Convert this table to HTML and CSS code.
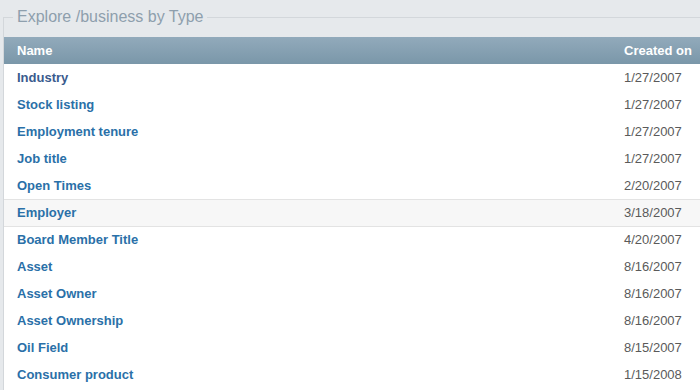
FILE: index.html
```html
<!DOCTYPE html>
<html lang="en">
<head>
  <meta charset="UTF-8" />
  <title>Explore /business by Type</title>
  <link rel="stylesheet" href="styles.css">
</head>
<body>
  <fieldset class="explore">
    <legend>Explore /business by Type</legend>
    <div class="list">
      <table class="types">
        <colgroup>
          <col class="col-name">
          <col class="col-date">
        </colgroup>
        <thead>
          <tr><th>Name</th><th>Created on</th></tr>
        </thead>
        <tbody>
          <tr><td><a href="#" class="visited">Industry</a></td><td>1/27/2007</td></tr>
          <tr><td><a href="#">Stock listing</a></td><td>1/27/2007</td></tr>
          <tr><td><a href="#">Employment tenure</a></td><td>1/27/2007</td></tr>
          <tr><td><a href="#">Job title</a></td><td>1/27/2007</td></tr>
          <tr><td><a href="#">Open Times</a></td><td>2/20/2007</td></tr>
          <tr class="hover"><td><a href="#">Employer</a></td><td>3/18/2007</td></tr>
          <tr><td><a href="#">Board Member Title</a></td><td>4/20/2007</td></tr>
          <tr><td><a href="#">Asset</a></td><td>8/16/2007</td></tr>
          <tr><td><a href="#">Asset Owner</a></td><td>8/16/2007</td></tr>
          <tr><td><a href="#">Asset Ownership</a></td><td>8/16/2007</td></tr>
          <tr><td><a href="#">Oil Field</a></td><td>8/15/2007</td></tr>
          <tr><td><a href="#">Consumer product</a></td><td>1/15/2008</td></tr>
        </tbody>
      </table>
    </div>
  </fieldset>
</body>
</html>
```

FILE: styles.css
```css
* {
  box-sizing: border-box;
}
body {
  margin: 0;
  background: #e6e9ec;
  font-family: "Liberation Sans", Arial, sans-serif;
  font-size: 13px;
  overflow: hidden;
}
.explore {
  margin: 8px 0 0 3px;
  padding: 11px 0 0 0;
  border: 1px solid #d3d7db;
  border-right: none;
  border-bottom: none;
  min-width: 0;
}
.explore legend {
  margin-left: 9px;
  padding: 0 4px;
  font-size: 16px;
  line-height: 18px;
  color: #8e9fad;
}
.list {
  background: #fff;
  padding-bottom: 20px;
}
.types {
  width: 700px;
  border-collapse: collapse;
  table-layout: fixed;
}
.col-name {
  width: 620px;
}
.types th {
  height: 27px;
  padding: 0;
  text-align: left;
  font-weight: bold;
  color: #fff;
  background: linear-gradient(#92aabb, #7a97a9);
}
.types th:first-child,
.types td:first-child {
  padding-left: 13px;
}
.types td {
  height: 27px;
  padding: 0;
  color: #5a5a5a;
}
.types a {
  font-weight: bold;
  color: #2a70a8;
  text-decoration: none;
}
.types a.visited {
  color: #3a5b8e;
}
.types tr.hover td {
  background: #f7f7f7;
  border-top: 1px solid #e3e3e3;
  border-bottom: 1px solid #e3e3e3;
}
```
